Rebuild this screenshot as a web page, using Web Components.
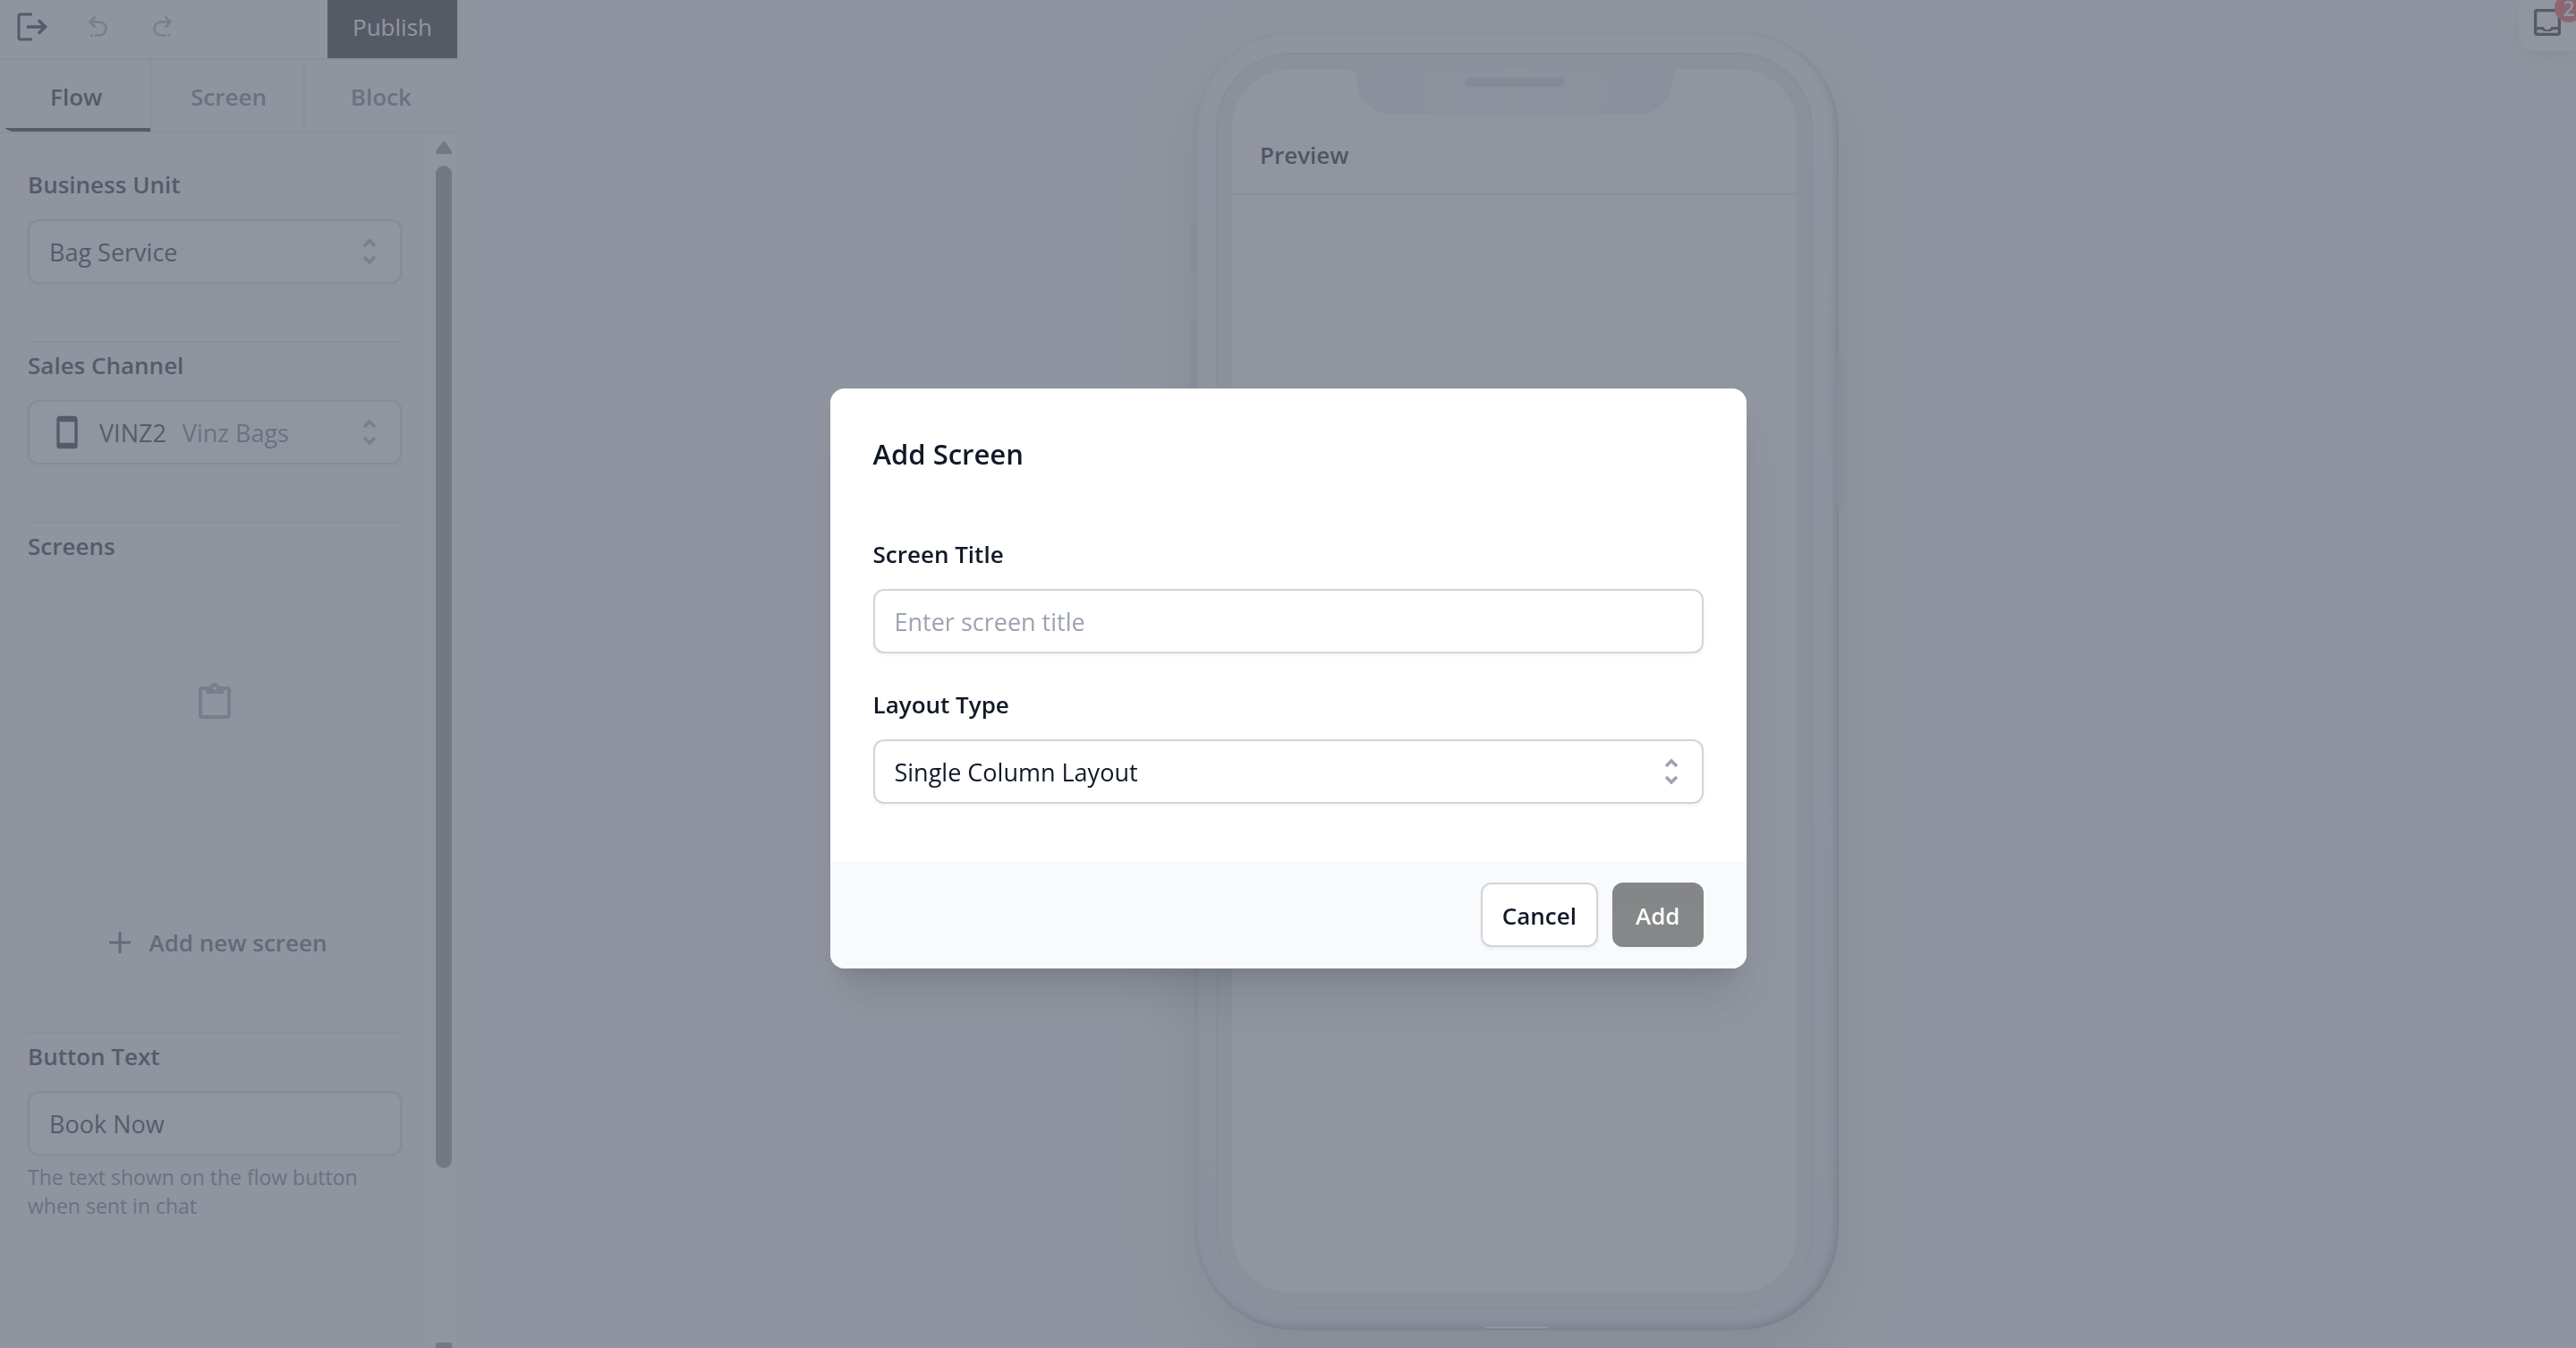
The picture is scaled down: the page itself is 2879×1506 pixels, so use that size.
<!DOCTYPE html>
<html lang="en">
<head>
  <meta charset="utf-8">
  <meta name="viewport" content="width=device-width, initial-scale=1">
  <title>Flow Builder</title>
  <style>
    html, body {
      height: 100%;
      margin: 0;
    }

    body {
      --ink: #111827;
      --muted: #6b7280;
      --faint: #9ca3af;
      --line: #d1d5db;
      --line-soft: #e5e7eb;
      --panel: #f9fafb;
      --accent: #141416;
      --strong-size: 26px;
      font-family: "Segoe UI", "Open Sans", "Noto Sans", sans-serif;
      font-size: 27px;
      line-height: 50px;
      color: var(--ink);
      overflow: hidden;
    }
  </style>
</head>
<body>
  <flow-builder>
    <builder-sidebar slot="sidebar">
      <side-section>
        <select-field label="Business Unit">Bag Service</select-field>
      </side-section>
      <side-section divided>
        <select-field label="Sales Channel" icon="cellphone" hint="Vinz Bags">VINZ2</select-field>
      </side-section>
      <side-section divided>
        <screen-list label="Screens"></screen-list>
      </side-section>
      <side-section divided>
        <text-field label="Button Text" value="Book Now" help="The text shown on the flow button when sent in chat"></text-field>
      </side-section>
    </builder-sidebar>

    <phone-preview>Preview</phone-preview>
    <inbox-widget slot="widget" count="2"></inbox-widget>
  </flow-builder>

  <modal-dialog heading="Add Screen">
    <text-field label="Screen Title" placeholder="Enter screen title"></text-field>
    <select-field label="Layout Type">Single Column Layout</select-field>
    <ui-button slot="actions">Cancel</ui-button>
    <ui-button slot="actions" primary disabled>Add</ui-button>
  </modal-dialog>

  <script>
    const ICONS = {
      exit: `<path d="M20 6H6.500Q5 6 5 7.500V32.500Q5 34 6.500 34H20" fill="none" stroke="currentColor" stroke-width="3"/>
             <path d="M14 20H34M27 12.500L34.500 20L27 27.500" fill="none" stroke="currentColor" stroke-width="3.500"/>`,
      undo: `<path d="M18.500 8.500L12.500 14.500L18.500 20.500M12.500 14.500H23A7.500 7.500 0 0 1 23 29.500H18" fill="none" stroke="currentColor" stroke-width="2.500"/>
             <path d="M13 28.200h2.700v2.600h-2.700z" fill="currentColor"/>`,
      redo: `<path d="M24.500 8.500L30.500 14.500L24.500 20.500M30.500 14.500H20A7.500 7.500 0 0 0 20 29.500H25" fill="none" stroke="currentColor" stroke-width="2.500"/>
             <path d="M27.300 28.200h2.700v2.600h-2.700z" fill="currentColor"/>`,
      plus: `<path d="M20 8V32M8 20H32" fill="none" stroke="currentColor" stroke-width="3"/>`,
      selector: `<path d="M14 14L20 8L26 14M26 26L20 32L14 26" fill="none" stroke="currentColor" stroke-width="3.500"/>`,
      cellphone: `<path transform="scale(1.6667)" fill="currentColor" d="M17,19H7V5H17M17,1H7C5.890,1 5,1.890 5,3V21A2,2 0 0,0 7,23H17A2,2 0 0,0 19,21V3C19,1.890 18.100,1 17,1Z"/>`,
      clipboard: `<path transform="scale(1.6667)" fill="currentColor" d="M19,3H14.820C14.400,1.840 13.300,1 12,1C10.700,1 9.600,1.840 9.180,3H5A2,2 0 0,0 3,5V19A2,2 0 0,0 5,21H19A2,2 0 0,0 21,19V5A2,2 0 0,0 19,3M12,3A1,1 0 0,1 13,4A1,1 0 0,1 12,5A1,1 0 0,1 11,4A1,1 0 0,1 12,3M7,7H17V5H19V19H5V5H7V7Z"/>`,
      inbox: `<path transform="scale(1.6667)" fill="currentColor" d="M19 3H5c-1.100 0-2 .9-2 2v14c0 1.100.9 2 2 2h14c1.100 0 2-.9 2-2V5c0-1.100-.9-2-2-2zm0 16H5v-2h3.560c.69 1.190 1.970 1 3.450 1s2.750.19 3.450-1H19v2zm0-4h-4.500c0 1.100-1.100 2-2.500 2s-2.500-.9-2.500-2H5V5h14v10z"/>`
    };

    // Small base: opens the shadow root and fills it once.
    class BaseElement extends HTMLElement {
      connectedCallback() {
        if (this.shadowRoot) return;
        this.attachShadow({ mode: 'open' });
        this.shadowRoot.innerHTML = this.template();
      }

      attr(name) {
        return this.getAttribute(name) || '';
      }
    }

    class UiIcon extends BaseElement {
      template() {
        return `
          <style>
            :host {
              display: block;
              flex: none;
              width: 40px;
              height: 40px;
            }

            svg {
              display: block;
              width: 100%;
              height: 100%;
            }
          </style>
          <svg viewBox="0 0 40 40" aria-hidden="true">${ICONS[this.attr('name')] || ''}</svg>
        `;
      }
    }

    class UiButton extends BaseElement {
      template() {
        return `
          <style>
            :host {
              display: block;
            }

            button {
              display: block;
              height: 72px;
              padding: 2px 22px 0;
              font: inherit;
              font-size: var(--strong-size);
              font-weight: 600;
              color: var(--ink);
              background: #fff;
              border: 2px solid var(--line);
              border-radius: 12px;
              box-shadow: 0 2px 4px rgba(0, 0, 0, 0.05);
            }

            :host([primary]) button {
              padding: 2px 24px 0;
              color: #fff;
              background: var(--accent);
              border-color: var(--accent);
            }

            button:disabled {
              opacity: 0.5;
            }
          </style>
          <button type="button" ${this.hasAttribute('disabled') ? 'disabled' : ''}><slot></slot></button>
        `;
      }
    }

    const FIELD_STYLES = `
      :host {
        display: block;
      }

      label {
        display: block;
        margin-bottom: 14px;
        font-size: var(--strong-size);
        font-weight: 600;
      }

      .control {
        box-sizing: border-box;
        width: 100%;
        height: 72px;
        background: #fff;
        border: 2px solid var(--line);
        border-radius: 12px;
        box-shadow: 0 2px 4px rgba(0, 0, 0, 0.05);
      }
    `;

    class TextField extends BaseElement {
      template() {
        const help = this.attr('help');

        return `
          <style>
            ${FIELD_STYLES}

            input {
              display: block;
              padding: 0 22px;
              font: inherit;
              color: inherit;
            }

            input::placeholder {
              color: var(--faint);
              opacity: 1;
            }

            p {
              margin: 8px 0 0;
              font-size: 23px;
              line-height: 32px;
              color: var(--muted);
            }
          </style>
          <label for="input">${this.attr('label')}</label>
          <input id="input" class="control" type="text" value="${this.attr('value')}" placeholder="${this.attr('placeholder')}">
          ${help ? `<p>${help}</p>` : ''}
        `;
      }
    }

    class SelectField extends BaseElement {
      template() {
        const icon = this.attr('icon');
        const hint = this.attr('hint');

        return `
          <style>
            ${FIELD_STYLES}

            .control {
              display: flex;
              align-items: center;
              padding: 0 14px 0 22px;
            }

            .lead {
              margin-right: 16px;
            }

            select {
              appearance: none;
              flex: 1;
              min-width: 0;
              height: 100%;
              padding: 2px 0 0;
              font: inherit;
              color: inherit;
              background: none;
              border: 0;
            }

            .with-hint select {
              flex: none;
              field-sizing: content;
            }

            .hint {
              flex: 1;
              margin-left: 18px;
              padding-top: 2px;
              color: var(--muted);
            }

            .arrows {
              color: var(--faint);
            }
          </style>
          <label for="select">${this.attr('label')}</label>
          <div class="control ${hint ? 'with-hint' : ''}">
            ${icon ? `<ui-icon class="lead" name="${icon}"></ui-icon>` : ''}
            <select id="select"><option>${this.textContent.trim()}</option></select>
            ${hint ? `<span class="hint">${hint}</span>` : ''}
            <ui-icon class="arrows" name="selector"></ui-icon>
          </div>
        `;
      }
    }

    class ScreenList extends BaseElement {
      template() {
        return `
          <style>
            :host {
              display: block;
              font-size: var(--strong-size);
            }

            h3 {
              margin: 0 0 14px;
              font: inherit;
              font-weight: 600;
            }

            .empty {
              display: flex;
              justify-content: center;
              padding: 112px 0 208px;
              color: var(--faint);
            }

            .empty ui-icon {
              width: 48px;
              height: 48px;
            }

            button {
              display: flex;
              align-items: center;
              justify-content: center;
              gap: 12px;
              width: 100%;
              height: 72px;
              padding: 0;
              font: inherit;
              font-weight: 600;
              color: #4b5563;
              background: none;
              border: 0;
            }
          </style>
          <h3>${this.attr('label')}</h3>
          <div class="empty"><ui-icon name="clipboard"></ui-icon></div>
          <button type="button"><ui-icon name="plus"></ui-icon>Add new screen</button>
        `;
      }
    }

    class SideSection extends BaseElement {
      template() {
        return `
          <style>
            :host {
              display: block;
              padding-bottom: 64px;
            }

            :host([divided]) {
              border-top: 2px solid var(--line-soft);
            }
          </style>
          <slot></slot>
        `;
      }
    }

    class BuilderSidebar extends BaseElement {
      template() {
        return `
          <style>
            :host {
              display: flex;
              flex-direction: column;
              width: 511px;
              height: 100%;
              background: var(--panel);
              box-shadow: 0 0 24px rgba(0, 0, 0, 0.07);
            }

            header {
              display: flex;
              align-items: center;
              gap: 32px;
              height: 65px;
              padding-left: 16px;
              border-bottom: 2px solid var(--line-soft);
            }

            button {
              font: inherit;
              border: 0;
              background: none;
              padding: 0;
              color: inherit;
            }

            .tool {
              padding-bottom: 6px;
            }

            .tool:disabled {
              color: var(--faint);
            }

            .publish {
              align-self: stretch;
              margin-left: auto;
              padding: 0 28px 6px;
              font-size: var(--strong-size);
              color: #fff;
              background: var(--accent);
            }

            nav {
              display: flex;
              height: 80px;
              border-bottom: 2px solid var(--line-soft);
            }

            .tab {
              flex: 1;
              padding-top: 2px;
              font-size: var(--strong-size);
              font-weight: 600;
              color: var(--muted);
            }

            .tab + .tab {
              box-shadow: -2px 0 0 var(--line-soft);
            }

            .tab.active {
              color: var(--accent);
              background: linear-gradient(var(--accent), var(--accent)) bottom / 100% 4px no-repeat;
              border-bottom-left-radius: 16px;
            }

            .body {
              display: flex;
              flex: 1;
              min-height: 0;
            }

            .content {
              flex: 1;
              padding: 32px 32px 0 31px;
              overflow: hidden;
            }

            .scrollbar {
              display: flex;
              flex-direction: column;
              align-items: center;
              width: 30px;
              padding-top: 9px;
              box-sizing: border-box;
              background: #fff;
              overflow: hidden;
              color: #8b8b8b;
            }

            .scrollbar svg {
              flex: none;
              width: 18px;
              height: 14px;
            }

            .track {
              flex: 1;
              margin: 13px 0;
            }

            .thumb {
              width: 18px;
              height: 86%;
              border-radius: 9px;
              background: currentColor;
            }
          </style>
          <header>
            <button class="tool" type="button" aria-label="Exit"><ui-icon name="exit"></ui-icon></button>
            <button class="tool" type="button" aria-label="Undo" disabled><ui-icon name="undo"></ui-icon></button>
            <button class="tool" type="button" aria-label="Redo" disabled><ui-icon name="redo"></ui-icon></button>
            <button class="publish" type="button">Publish</button>
          </header>
          <nav>
            <button class="tab active" type="button">Flow</button>
            <button class="tab" type="button">Screen</button>
            <button class="tab" type="button">Block</button>
          </nav>
          <div class="body">
            <div class="content"><slot></slot></div>
            <div class="scrollbar" aria-hidden="true">
              <svg viewBox="0 0 18 14"><path d="M9 2L16 12H2Z" fill="currentColor" stroke="currentColor" stroke-width="4" stroke-linejoin="round"/></svg>
              <div class="track"><div class="thumb"></div></div>
              <svg style="height: 6px" viewBox="0 0 18 6"><path d="M2 0H16Q18 0 18 2V6H0V2Q0 0 2 0Z" fill="currentColor"/></svg>
            </div>
          </div>
        `;
      }
    }

    class PhonePreview extends BaseElement {
      template() {
        return `
          <style>
            :host {
              display: block;
              position: relative;
              box-sizing: border-box;
              width: 720px;
              height: 100%;
              padding: 24px 29px 24px 24px;
              border-radius: 112px;
              background: linear-gradient(#fafafb, #f3f3f4 40%, #ebecee);
              box-shadow:
                inset -3px -4px 10px rgba(0, 0, 0, 0.3),
                inset 2px 0 4px rgba(0, 0, 0, 0.06),
                0 32px 80px rgba(0, 0, 0, 0.16);
            }

            .bezel {
              box-sizing: border-box;
              height: 100%;
              padding: 18px;
              border-radius: 84px;
              background: #e9eaec;
              box-shadow: inset 0 0 0 2px #e0e1e3;
            }

            .screen {
              height: 100%;
              border-radius: 66px;
              background: #fff;
              overflow: hidden;
            }

            .notch {
              display: flex;
              justify-content: center;
              width: 370px;
              height: 51px;
              margin: 0 auto;
            }

            .notch svg {
              width: 100%;
              height: 100%;
            }

            .title {
              display: flex;
              align-items: center;
              height: 88px;
              padding: 2px 31px 0;
              box-sizing: border-box;
              font-size: var(--strong-size);
              font-weight: 600;
              color: #000;
            }

            hr {
              height: 2px;
              margin: 0;
              border: 0;
              background: var(--line-soft);
            }

            /* hardware keys sit over the edge of the frame */
            .key {
              position: absolute;
              width: 8px;
              border-radius: 4px;
              background: #d9dadd;
            }

            .mute { left: -5px; top: 212px; height: 58px; }
            .volume { left: -5px; top: 322px; height: 120px; }
            .power { right: -5px; top: 364px; height: 168px; }

            .port {
              position: absolute;
              left: 325px;
              bottom: 2px;
              width: 70px;
              height: 2px;
              background: #fff;
            }
          </style>
          <span class="key mute"></span>
          <span class="key volume"></span>
          <span class="key power"></span>
          <span class="port"></span>
          <div class="bezel">
            <div class="screen">
              <div class="notch">
                <svg viewBox="0 0 370 51" aria-hidden="true">
                  <defs>
                    <linearGradient id="shade">
                      <stop offset="0" stop-color="#e9eaec"/>
                      <stop offset="0.5" stop-color="#f1f1f3"/>
                      <stop offset="1" stop-color="#e9eaec"/>
                    </linearGradient>
                  </defs>
                  <path d="M0 0Q8 0 8 10V11A40 40 0 0 0 48 51H322A40 40 0 0 0 362 11V10Q362 0 370 0Z" fill="url(#shade)"/>
                  <rect x="129" y="10" width="112" height="10" rx="5" fill="#d4d5d8"/>
                </svg>
              </div>
              <div class="title"><slot></slot></div>
              <hr>
            </div>
          </div>
        `;
      }
    }

    class InboxWidget extends BaseElement {
      template() {
        return `
          <style>
            :host {
              display: block;
            }

            button {
              display: block;
              position: relative;
              width: 64px;
              height: 57px;
              padding: 5px 12px 12px;
              font: inherit;
              color: #141414;
              background: #fff;
              border: 0;
              border-radius: 0 0 0 16px;
              box-shadow: 0 8px 20px rgba(0, 0, 0, 0.12);
            }

            .badge {
              position: absolute;
              top: -7px;
              right: -8px;
              width: 32px;
              height: 32px;
              border-radius: 16px;
              font-size: 23px;
              font-weight: 600;
              line-height: 32px;
              text-align: center;
              color: #fff;
              background: #ef4444;
            }
          </style>
          <button type="button" aria-label="Inbox">
            <ui-icon name="inbox"></ui-icon>
            <span class="badge">${this.attr('count')}</span>
          </button>
        `;
      }
    }

    class FlowBuilder extends BaseElement {
      template() {
        return `
          <style>
            :host {
              display: flex;
              height: 100vh;
              background: #fcfcfd;
              overflow: hidden;
            }

            main {
              box-sizing: border-box;
              display: flex;
              flex: 1;
              justify-content: center;
              padding: 35px 0 20px;
            }

            .widget {
              position: absolute;
              top: 0;
              right: 0;
            }
          </style>
          <slot name="sidebar"></slot>
          <main><slot></slot></main>
          <div class="widget"><slot name="widget"></slot></div>
        `;
      }
    }

    class ModalDialog extends BaseElement {
      template() {
        return `
          <style>
            :host {
              position: fixed;
              inset: 0;
              display: flex;
              align-items: center;
              justify-content: center;
              padding-top: 10px;
              background: rgba(107, 114, 128, 0.75);
            }

            .dialog {
              width: 1024px;
              max-width: 100%;
              border-radius: 16px;
              background: #fff;
              overflow: hidden;
              box-shadow: 0 40px 50px -10px rgba(0, 0, 0, 0.1), 0 16px 20px -12px rgba(0, 0, 0, 0.1);
            }

            .body {
              display: flex;
              flex-direction: column;
              gap: 32px;
              padding: 48px 48px 64px;
            }

            h2 {
              margin: 0 0 30px;
              font-size: 31px;
              font-weight: 600;
              line-height: 50px;
            }

            footer {
              display: flex;
              justify-content: flex-end;
              gap: 16px;
              padding: 24px 48px;
              background: var(--panel);
            }
          </style>
          <section class="dialog" role="dialog" aria-modal="true" aria-labelledby="heading">
            <div class="body">
              <h2 id="heading">${this.attr('heading')}</h2>
              <slot></slot>
            </div>
            <footer><slot name="actions"></slot></footer>
          </section>
        `;
      }
    }

    customElements.define('ui-icon', UiIcon);
    customElements.define('ui-button', UiButton);
    customElements.define('text-field', TextField);
    customElements.define('select-field', SelectField);
    customElements.define('screen-list', ScreenList);
    customElements.define('side-section', SideSection);
    customElements.define('builder-sidebar', BuilderSidebar);
    customElements.define('phone-preview', PhonePreview);
    customElements.define('inbox-widget', InboxWidget);
    customElements.define('flow-builder', FlowBuilder);
    customElements.define('modal-dialog', ModalDialog);
  </script>
</body>
</html>
